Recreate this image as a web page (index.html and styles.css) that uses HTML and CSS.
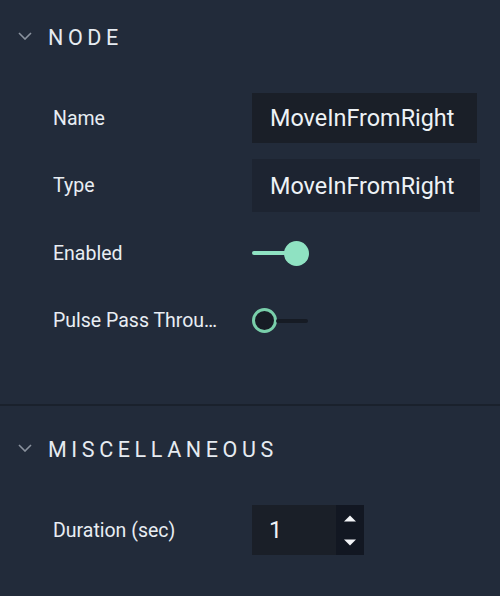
FILE: index.html
```html
<!DOCTYPE html>
<html>
<head>
<meta charset="utf-8">
<link rel="stylesheet" href="styles.css">
</head>
<body>
<section class="section first">
  <div class="header">
    <svg class="chev" width="14" height="8" viewBox="0 0 14 8"><path d="M1 1 L7 7 L13 1" fill="none" stroke="#8a929e" stroke-width="1.6"/></svg>
    <span class="title">NODE</span>
  </div>
  <div class="rows">
    <div class="row">
      <div class="label">Name</div>
      <div class="text-input">MoveInFromRight</div>
    </div>
    <div class="row">
      <div class="label">Type</div>
      <div class="text-input type">MoveInFromRight</div>
    </div>
    <div class="row">
      <div class="label">Enabled</div>
      <div class="toggle on"><span class="track"></span><span class="thumb"></span></div>
    </div>
    <div class="row">
      <div class="label">Pulse Pass Through</div>
      <div class="toggle off"><span class="thumb"></span><span class="track"></span></div>
    </div>
  </div>
</section>
<div class="divider"></div>
<section class="section second">
  <div class="header">
    <svg class="chev" width="14" height="8" viewBox="0 0 14 8"><path d="M1 1 L7 7 L13 1" fill="none" stroke="#8a929e" stroke-width="1.6"/></svg>
    <span class="title">MISCELLANEOUS</span>
  </div>
  <div class="rows">
    <div class="row">
      <div class="label">Duration (sec)</div>
      <div class="number-input">
        <span class="num">1</span>
        <span class="spin">
          <svg width="12" height="7" viewBox="0 0 12 7"><path d="M0 6.5 L6 0.5 L12 6.5 Z" fill="#f2f4f7"/></svg>
          <svg width="12" height="7" viewBox="0 0 12 7"><path d="M0 0.5 L6 6.5 L12 0.5 Z" fill="#f2f4f7"/></svg>
        </span>
      </div>
    </div>
  </div>
</section>
</body>
</html>
```
FILE: styles.css
```css
html, body {
  margin: 0;
  padding: 0;
}
body {
  width: 500px;
  height: 596px;
  background: #222b3a;
  font-family: Roboto, "Liberation Sans", sans-serif;
  color: #e9eef4;
  overflow: hidden;
}
.section.first {
  height: 404px;
}
.section.second {
  padding-top: 6px;
}
.header {
  height: 74px;
  display: flex;
  align-items: center;
  padding-left: 18px;
}
.chev {
  margin-right: 16px;
  margin-top: -2px;
}
.title {
  font-size: 21.5px;
  letter-spacing: 4.6px;
  color: #e6ebf1;
}
.rows {
  display: flex;
  flex-direction: column;
  gap: 17.5px;
  padding-top: 19px;
}
.row {
  height: 50px;
  display: flex;
  align-items: center;
}
.label {
  width: 168px;
  margin-left: 53px;
  margin-right: 31px;
  font-size: 19.5px;
  white-space: nowrap;
  overflow: hidden;
  text-overflow: ellipsis;
  color: #e8edf3;
}
.text-input {
  width: 225px;
  height: 50px;
  box-sizing: border-box;
  background: #1a1f28;
  font-size: 23.4px;
  display: flex;
  align-items: center;
  padding-left: 18px;
  color: #eef2f6;
}
.text-input.type {
  width: 228px;
  height: 53px;
  background: #1d2431;
}
.toggle {
  display: flex;
  align-items: center;
  height: 26px;
}
.toggle .track {
  height: 4px;
  border-radius: 2px;
}
.toggle .thumb {
  border-radius: 50%;
  box-sizing: border-box;
}
.toggle.on .track {
  width: 36px;
  background: #8fe2c2;
  margin-right: -4px;
}
.toggle.on .thumb {
  width: 25px;
  height: 25px;
  background: #8fe2c2;
}
.toggle.off .thumb {
  width: 25px;
  height: 25px;
  border: 3px solid #79cfaa;
  background: #171c25;
}
.toggle.off .track {
  width: 32px;
  background: #161b24;
  margin-left: -1px;
}
.number-input {
  width: 112px;
  height: 50px;
  display: flex;
  background: #1a1f28;
}
.num {
  flex: 1;
  font-size: 23.4px;
  display: flex;
  align-items: center;
  padding-left: 17px;
  color: #eef2f6;
}
.spin {
  width: 28px;
  background: #121722;
  display: flex;
  flex-direction: column;
  align-items: center;
  justify-content: center;
  gap: 17px;
}
.divider {
  height: 2px;
  background: #1a212c;
}
```
